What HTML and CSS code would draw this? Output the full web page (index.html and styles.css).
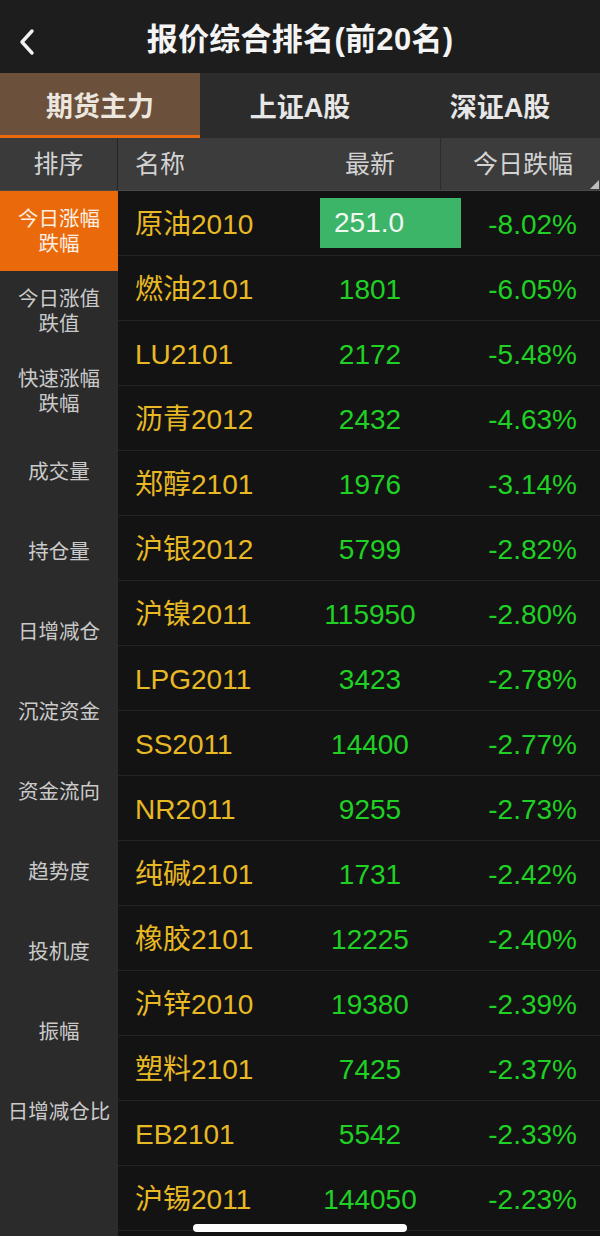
FILE: index.html
```html
<!DOCTYPE html>
<html lang="zh-CN">
<head>
    <meta charset="UTF-8">
    <meta name="viewport" content="width=device-width, initial-scale=1.0">
    <title>报价综合排名</title>
    <link rel="stylesheet" href="styles.css">
</head>
<body>
    <div class="topbar">
        <svg class="back" width="18" height="28" viewBox="0 0 18 28">
            <polyline points="14,3 4,14 14,25" fill="none" stroke="#f2f2f2" stroke-width="3.4" stroke-linecap="round" stroke-linejoin="round"/>
        </svg>
        <h1>报价综合排名(前20名)</h1>
    </div>

    <div class="tabs">
        <div class="tab active">期货主力</div>
        <div class="tab">上证A股</div>
        <div class="tab">深证A股</div>
    </div>

    <div class="main">
        <div class="sidebar">
            <div class="side-head">排序</div>
            <div class="side-item selected">今日涨幅<br>跌幅</div>
            <div class="side-item">今日涨值<br>跌值</div>
            <div class="side-item">快速涨幅<br>跌幅</div>
            <div class="side-item">成交量</div>
            <div class="side-item">持仓量</div>
            <div class="side-item">日增减仓</div>
            <div class="side-item">沉淀资金</div>
            <div class="side-item">资金流向</div>
            <div class="side-item">趋势度</div>
            <div class="side-item">投机度</div>
            <div class="side-item">振幅</div>
            <div class="side-item">日增减仓比</div>
        </div>

        <div class="table">
            <div class="thead">
                <div class="col-name">名称</div>
                <div class="col-price">最新</div>
                <div class="col-pct">今日跌幅<span class="corner"></span></div>
            </div>
            <div class="row">
                <div class="col-name">原油2010</div>
                <div class="col-price flash"><span class="flash-box">251.0</span></div>
                <div class="col-pct">-8.02%</div>
            </div>
            <div class="row"><div class="col-name">燃油2101</div><div class="col-price">1801</div><div class="col-pct">-6.05%</div></div>
            <div class="row"><div class="col-name">LU2101</div><div class="col-price">2172</div><div class="col-pct">-5.48%</div></div>
            <div class="row"><div class="col-name">沥青2012</div><div class="col-price">2432</div><div class="col-pct">-4.63%</div></div>
            <div class="row"><div class="col-name">郑醇2101</div><div class="col-price">1976</div><div class="col-pct">-3.14%</div></div>
            <div class="row"><div class="col-name">沪银2012</div><div class="col-price">5799</div><div class="col-pct">-2.82%</div></div>
            <div class="row"><div class="col-name">沪镍2011</div><div class="col-price">115950</div><div class="col-pct">-2.80%</div></div>
            <div class="row"><div class="col-name">LPG2011</div><div class="col-price">3423</div><div class="col-pct">-2.78%</div></div>
            <div class="row"><div class="col-name">SS2011</div><div class="col-price">14400</div><div class="col-pct">-2.77%</div></div>
            <div class="row"><div class="col-name">NR2011</div><div class="col-price">9255</div><div class="col-pct">-2.73%</div></div>
            <div class="row"><div class="col-name">纯碱2101</div><div class="col-price">1731</div><div class="col-pct">-2.42%</div></div>
            <div class="row"><div class="col-name">橡胶2101</div><div class="col-price">12225</div><div class="col-pct">-2.40%</div></div>
            <div class="row"><div class="col-name">沪锌2010</div><div class="col-price">19380</div><div class="col-pct">-2.39%</div></div>
            <div class="row"><div class="col-name">塑料2101</div><div class="col-price">7425</div><div class="col-pct">-2.37%</div></div>
            <div class="row"><div class="col-name">EB2101</div><div class="col-price">5542</div><div class="col-pct">-2.33%</div></div>
            <div class="row"><div class="col-name">沪锡2011</div><div class="col-price">144050</div><div class="col-pct">-2.23%</div></div>
        </div>
    </div>

    <div class="home-bar"></div>
</body>
</html>
```

FILE: styles.css
```css
body {
    margin: 0;
    width: 600px;
    height: 1236px;
    overflow: hidden;
    background-color: #121312;
    font-family: "Liberation Sans", "Noto Sans CJK SC", sans-serif;
    position: relative;
}
.topbar {
    height: 73px;
    padding-top: 7px;
    box-sizing: border-box;
    background-color: #1d1d1d;
    display: flex;
    align-items: center;
    justify-content: center;
    position: relative;
}
.back {
    position: absolute;
    left: 18px;
    top: 28px;
}
.topbar h1 {
    margin: 0;
    color: #f4f4f4;
    font-size: 31px;
    line-height: 36px;
    font-weight: bold;
    letter-spacing: 0.3px;
}
.tabs {
    display: flex;
    height: 65px;
    background-color: #2c2c2c;
}
.tab {
    flex: 1;
    display: flex;
    align-items: center;
    justify-content: center;
    color: #e6e6e6;
    font-size: 27px;
    line-height: 32px;
    font-weight: bold;
    padding-top: 4px;
    box-sizing: border-box;
}
.tab.active {
    background-color: #6b503c;
    color: #ece6df;
    border-bottom: 3px solid #ea6a10;
    padding-top: 6px;
}
.main {
    display: grid;
    grid-template-columns: 118px 1fr;
}
.sidebar {
    background-color: #2b2b2b;
    height: 1098px;
}
.side-head {
    height: 53px;
    background-color: #3a3a3a;
    border-right: 1px solid #262626;
    border-bottom: 1px solid #4a4a4a;
    box-sizing: border-box;
    display: flex;
    align-items: center;
    justify-content: center;
    color: #d2d2d2;
    font-size: 25px;
    line-height: 30px;
}
.side-item {
    height: 80px;
    display: flex;
    align-items: center;
    justify-content: center;
    text-align: center;
    color: #cacaca;
    font-size: 20.5px;
    line-height: 25px;
}
.side-item.selected {
    background-color: #ea6a0b;
    color: #fbefe4;
}
.thead {
    height: 53px;
    display: flex;
    background-color: #3c3c3c;
    border-bottom: 1px solid #4a4a4a;
    box-sizing: border-box;
    color: #d2d2d2;
    font-size: 25px;
    line-height: 30px;
}
.thead > div {
    display: flex;
    align-items: center;
}
.col-name {
    width: 182px;
    padding-left: 17px;
    box-sizing: border-box;
}
.col-price {
    width: 140px;
    justify-content: center;
}
.col-pct {
    flex: 1;
    justify-content: flex-end;
    padding-right: 23px;
}
.thead .col-pct {
    border-left: 1px solid #2c2c2c;
    padding-right: 27px;
    position: relative;
}
.corner {
    position: absolute;
    right: 1px;
    bottom: 1px;
    width: 0;
    height: 0;
    border-left: 9px solid transparent;
    border-bottom: 9px solid #bdbdbd;
}
.row {
    height: 65px;
    display: flex;
    padding-top: 4px;
    border-bottom: 1px solid #232423;
    box-sizing: border-box;
    font-size: 28px;
    line-height: 34px;
}
.row > div {
    display: flex;
    align-items: center;
}
.row .col-name {
    color: #e8b925;
}
.row .col-price,
.row .col-pct {
    color: #20d024;
}
.row .col-price.flash {
    justify-content: flex-start;
    padding-left: 20px;
    box-sizing: border-box;
}
.flash-box {
    display: block;
    flex-shrink: 0;
    width: 141px;
    height: 50px;
    line-height: 50px;
    padding-left: 14px;
    margin-top: -4px;
    box-sizing: border-box;
    background-color: #3cb568;
    color: #f2f7f2;
    margin-right: -40px;
}
.home-bar {
    position: absolute;
    left: 193px;
    bottom: 4px;
    width: 214px;
    height: 8px;
    border-radius: 4px;
    background-color: #ffffff;
}
```
